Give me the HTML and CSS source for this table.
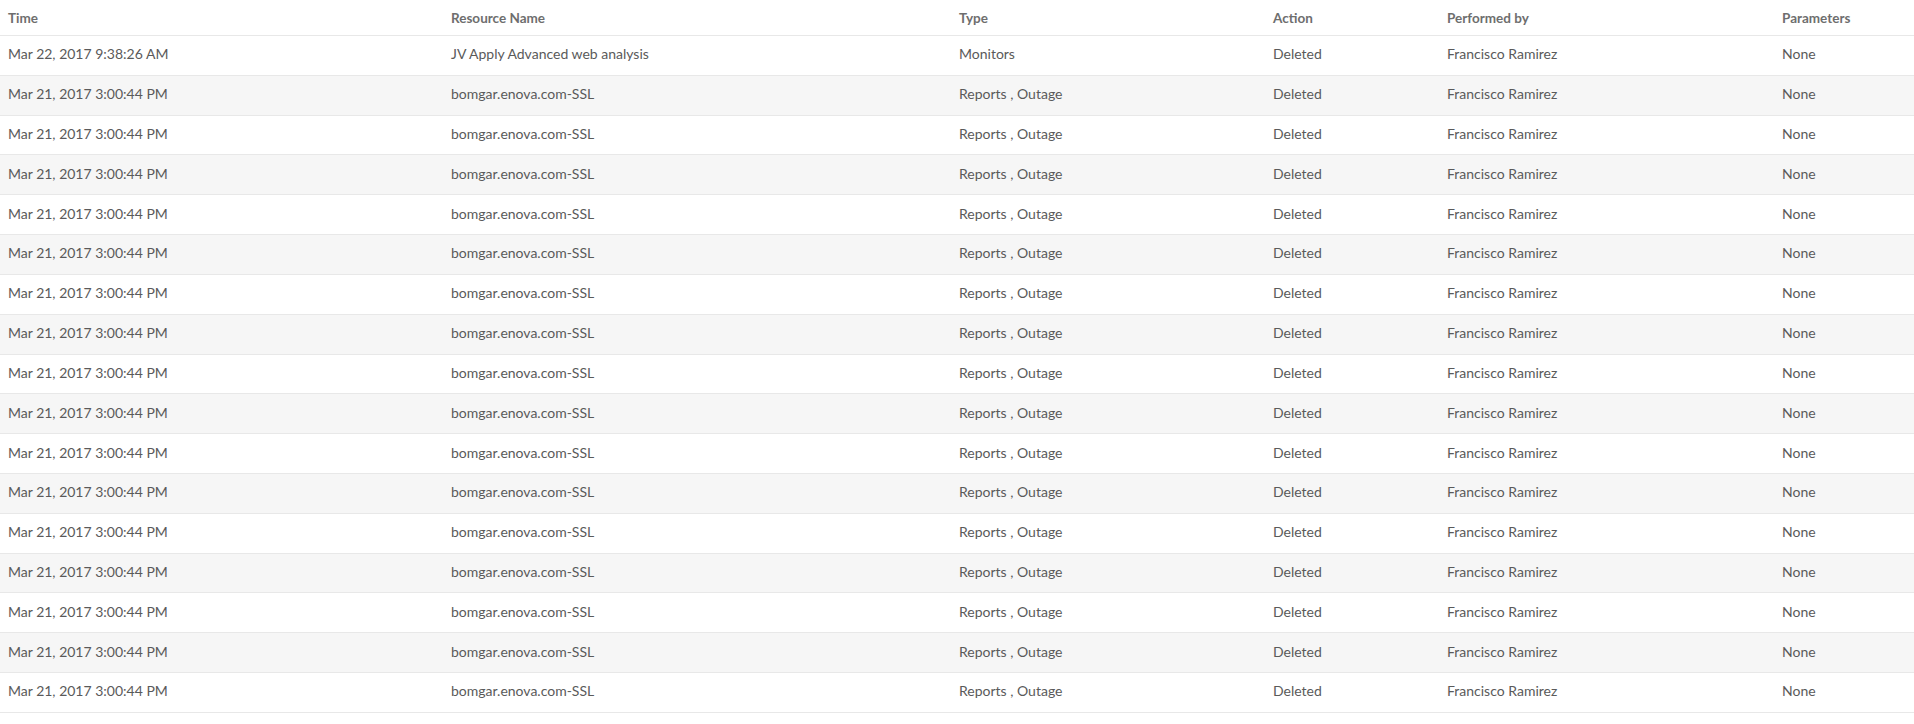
FILE: index.html
```html
<!DOCTYPE html>
<html>
<head>
<meta charset="utf-8">
<link rel="stylesheet" href="styles.css">
</head>
<body>
<div class="log">
  <div class="row head">
    <div class="cell">Time</div>
    <div class="cell">Resource Name</div>
    <div class="cell">Type</div>
    <div class="cell">Action</div>
    <div class="cell">Performed by</div>
    <div class="cell">Parameters</div>
  </div>
  <div class="row"><div class="cell">Mar 22, 2017 9:38:26 AM</div><div class="cell">JV Apply Advanced web analysis</div><div class="cell">Monitors</div><div class="cell">Deleted</div><div class="cell">Francisco Ramirez</div><div class="cell">None</div></div>
  <div class="row"><div class="cell">Mar 21, 2017 3:00:44 PM</div><div class="cell">bomgar.enova.com-SSL</div><div class="cell">Reports , Outage</div><div class="cell">Deleted</div><div class="cell">Francisco Ramirez</div><div class="cell">None</div></div>
  <div class="row"><div class="cell">Mar 21, 2017 3:00:44 PM</div><div class="cell">bomgar.enova.com-SSL</div><div class="cell">Reports , Outage</div><div class="cell">Deleted</div><div class="cell">Francisco Ramirez</div><div class="cell">None</div></div>
  <div class="row"><div class="cell">Mar 21, 2017 3:00:44 PM</div><div class="cell">bomgar.enova.com-SSL</div><div class="cell">Reports , Outage</div><div class="cell">Deleted</div><div class="cell">Francisco Ramirez</div><div class="cell">None</div></div>
  <div class="row"><div class="cell">Mar 21, 2017 3:00:44 PM</div><div class="cell">bomgar.enova.com-SSL</div><div class="cell">Reports , Outage</div><div class="cell">Deleted</div><div class="cell">Francisco Ramirez</div><div class="cell">None</div></div>
  <div class="row"><div class="cell">Mar 21, 2017 3:00:44 PM</div><div class="cell">bomgar.enova.com-SSL</div><div class="cell">Reports , Outage</div><div class="cell">Deleted</div><div class="cell">Francisco Ramirez</div><div class="cell">None</div></div>
  <div class="row"><div class="cell">Mar 21, 2017 3:00:44 PM</div><div class="cell">bomgar.enova.com-SSL</div><div class="cell">Reports , Outage</div><div class="cell">Deleted</div><div class="cell">Francisco Ramirez</div><div class="cell">None</div></div>
  <div class="row"><div class="cell">Mar 21, 2017 3:00:44 PM</div><div class="cell">bomgar.enova.com-SSL</div><div class="cell">Reports , Outage</div><div class="cell">Deleted</div><div class="cell">Francisco Ramirez</div><div class="cell">None</div></div>
  <div class="row"><div class="cell">Mar 21, 2017 3:00:44 PM</div><div class="cell">bomgar.enova.com-SSL</div><div class="cell">Reports , Outage</div><div class="cell">Deleted</div><div class="cell">Francisco Ramirez</div><div class="cell">None</div></div>
  <div class="row"><div class="cell">Mar 21, 2017 3:00:44 PM</div><div class="cell">bomgar.enova.com-SSL</div><div class="cell">Reports , Outage</div><div class="cell">Deleted</div><div class="cell">Francisco Ramirez</div><div class="cell">None</div></div>
  <div class="row"><div class="cell">Mar 21, 2017 3:00:44 PM</div><div class="cell">bomgar.enova.com-SSL</div><div class="cell">Reports , Outage</div><div class="cell">Deleted</div><div class="cell">Francisco Ramirez</div><div class="cell">None</div></div>
  <div class="row"><div class="cell">Mar 21, 2017 3:00:44 PM</div><div class="cell">bomgar.enova.com-SSL</div><div class="cell">Reports , Outage</div><div class="cell">Deleted</div><div class="cell">Francisco Ramirez</div><div class="cell">None</div></div>
  <div class="row"><div class="cell">Mar 21, 2017 3:00:44 PM</div><div class="cell">bomgar.enova.com-SSL</div><div class="cell">Reports , Outage</div><div class="cell">Deleted</div><div class="cell">Francisco Ramirez</div><div class="cell">None</div></div>
  <div class="row"><div class="cell">Mar 21, 2017 3:00:44 PM</div><div class="cell">bomgar.enova.com-SSL</div><div class="cell">Reports , Outage</div><div class="cell">Deleted</div><div class="cell">Francisco Ramirez</div><div class="cell">None</div></div>
  <div class="row"><div class="cell">Mar 21, 2017 3:00:44 PM</div><div class="cell">bomgar.enova.com-SSL</div><div class="cell">Reports , Outage</div><div class="cell">Deleted</div><div class="cell">Francisco Ramirez</div><div class="cell">None</div></div>
  <div class="row"><div class="cell">Mar 21, 2017 3:00:44 PM</div><div class="cell">bomgar.enova.com-SSL</div><div class="cell">Reports , Outage</div><div class="cell">Deleted</div><div class="cell">Francisco Ramirez</div><div class="cell">None</div></div>
  <div class="row"><div class="cell">Mar 21, 2017 3:00:44 PM</div><div class="cell">bomgar.enova.com-SSL</div><div class="cell">Reports , Outage</div><div class="cell">Deleted</div><div class="cell">Francisco Ramirez</div><div class="cell">None</div></div>
</div>
</body>
</html>
```

FILE: styles.css
```css
html, body {
  margin: 0;
  padding: 0;
  background: #ffffff;
}

body {
  font-family: "Lato", "Liberation Sans", sans-serif;
  font-size: 14px;
  color: #5a5a5a;
}

.log {
  display: flex;
  flex-direction: column;
}

.row {
  display: grid;
  grid-template-columns: 443px 508px 314px 174px 335px 1fr;
  align-items: center;
  box-sizing: border-box;
  height: 39.82px;
  border-bottom: 1px solid #e8e8e8;
}

.row:nth-child(odd) {
  background: #f6f6f6;
}

.row.head {
  height: 36px;
  background: #ffffff;
  font-size: 13.5px;
  font-weight: 700;
  color: #6e6e6e;
}

.cell {
  padding: 0 8px 3px;
  white-space: nowrap;
}

.row.head .cell {
  padding-bottom: 0;
}
```
